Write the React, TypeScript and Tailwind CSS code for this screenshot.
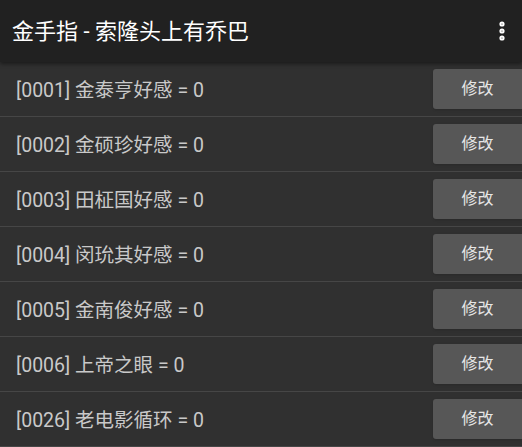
import { EllipsisVertical } from "lucide-react";

const cheats = [
  { id: "0001", name: "金泰亨好感", value: 0 },
  { id: "0002", name: "金硕珍好感", value: 0 },
  { id: "0003", name: "田柾国好感", value: 0 },
  { id: "0004", name: "闵玧其好感", value: 0 },
  { id: "0005", name: "金南俊好感", value: 0 },
  { id: "0006", name: "上帝之眼", value: 0 },
  { id: "0026", name: "老电影循环", value: 0 },
];

const CheatRow = ({ id, name, value }: { id: string; name: string; value: number }) => {
  return (
    <div className="flex items-center justify-between h-[55px] border-b border-[#464646] shrink-0">
      <span className="pl-4 pt-[3px] text-[19.5px] text-[#c9c9c9] whitespace-nowrap">
        [{id}] {name} = {value}
      </span>
      <button className="w-[89px] h-10 bg-[#575757] rounded-l-[3px] text-[16px] text-[#e6e6e6] shadow-sm">
        修改
      </button>
    </div>
  );
};

export default function App() {
  return (
    <div
      className="w-[522px] h-[447px] overflow-hidden flex flex-col bg-[#303030]"
      style={{ fontFamily: "Roboto, 'Noto Sans CJK SC', sans-serif" }}
    >
      <div className="relative z-10 flex items-center justify-between h-[62px] shrink-0 bg-[#212121] shadow-[0_2px_4px_rgba(0,0,0,0.45)]">
        <h1 className="pl-3 text-[22px] text-white">金手指 - 索隆头上有乔巴</h1>
        <EllipsisVertical className="w-6 h-6 mr-2 text-white" strokeWidth={3.2} />
      </div>
      <div className="flex flex-col">
        {cheats.map((c) => (
          <CheatRow key={c.id} {...c} />
        ))}
      </div>
    </div>
  );
}
